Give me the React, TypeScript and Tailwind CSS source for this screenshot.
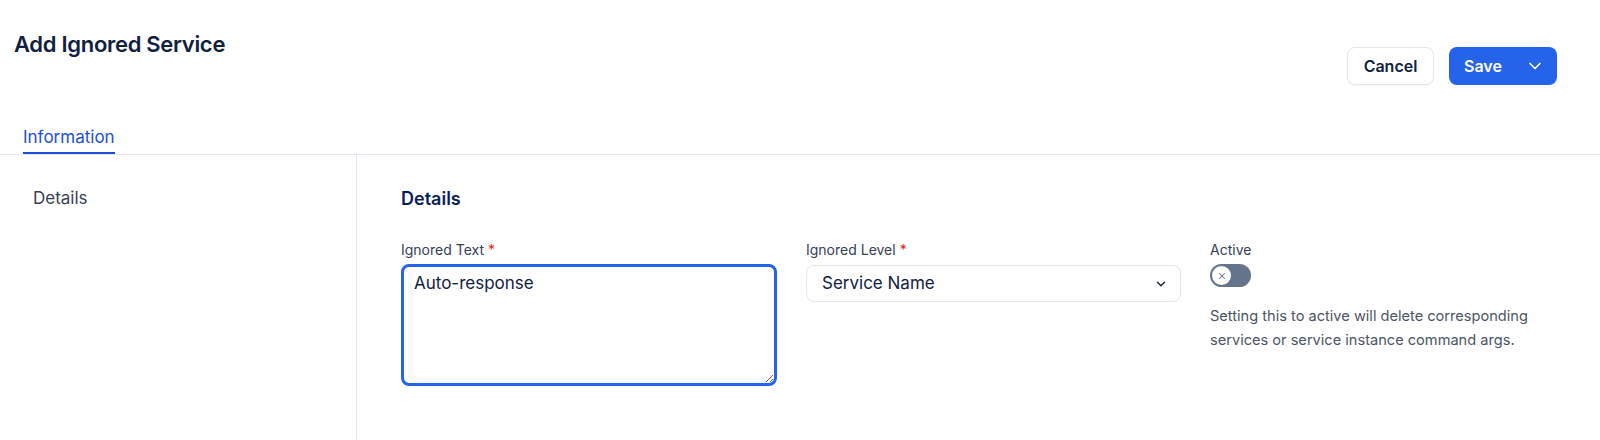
import { ChevronDown, X } from 'lucide-react';

export default function App() {
  return (
    <div className="h-[440px] w-[1600px] overflow-hidden bg-white font-['Inter',sans-serif] text-[#0f1f3d]">
      <div className="flex items-start justify-between pl-[14px] pr-[43px]">
        <h1 className="pt-[30px] text-[22px] font-semibold leading-[28px] tracking-[-0.3px] text-[#0f213f]">Add Ignored Service</h1>
        <div className="mt-[47px] flex gap-[15px]">
          <button className="h-[38px] w-[87px] rounded-[8px] border border-[#e5e7eb] bg-white text-[16px] font-semibold text-[#0f213f] shadow-[0_1px_2px_rgba(0,0,0,0.04)]">
            Cancel
          </button>
          <button className="flex h-[38px] w-[108px] items-center justify-between rounded-[8px] bg-[#2563eb] pl-[15px] pr-[12px] text-[16px] font-semibold text-white">
            Save
            <ChevronDown size={20} strokeWidth={2} />
          </button>
        </div>
      </div>

      <div className="mt-[40px] flex border-b border-[#e2e8f0] pl-[23px]">
        <div className="border-b-2 border-[#1d4ed8] pb-[3px] text-[17px] leading-[24px] text-[#1d4ed8]">Information</div>
      </div>

      <div className="flex h-[286px]">
        <aside className="w-[357px] shrink-0 border-r border-[#e2e8f0] pl-[33px] pt-[31px]">
          <div className="text-[17px] leading-[24px] text-[#374151]">Details</div>
        </aside>
        <main className="flex-1 pl-[44px] pt-[30px]">
          <h2 className="text-[18px] font-semibold leading-[28px] text-[#0a1e5c]">Details</h2>
          <div className="mt-[27px] flex gap-[29px]">
            <div className="w-[376px]">
              <label className="block text-[14px] leading-[20px] text-[#334155]">
                Ignored Text <span className="text-[#dc2626]">*</span>
              </label>
              <textarea
                defaultValue="Auto-response"
                className="mt-[4px] block h-[122px] w-[376px] resize-y rounded-[8px] border-[3px] border-[#2563eb] px-[10px] py-[4px] text-[17px] leading-[24px] text-[#0f213f] outline-none"
              />
            </div>
            <div className="w-[375px]">
              <label className="block text-[14px] leading-[20px] text-[#334155]">
                Ignored Level <span className="text-[#dc2626]">*</span>
              </label>
              <div className="mt-[5px] flex h-[37px] items-center justify-between rounded-[8px] border border-[#e2e8f0] pl-[15px] pr-[12px] text-[17px] text-[#0f213f]">
                <span>Service Name</span>
                <ChevronDown size={14} strokeWidth={2.5} className="text-[#1f2937]" />
              </div>
            </div>
            <div className="w-[376px]">
              <label className="block text-[14px] leading-[20px] text-[#334155]">Active</label>
              <div className="mt-[4px] flex h-[23px] w-[41px] items-center rounded-full bg-[#64748b] px-[2px]">
                <div className="flex h-[19px] w-[19px] items-center justify-center rounded-full bg-white">
                  <X size={10} strokeWidth={2.5} className="text-[#64748b]" />
                </div>
              </div>
              <p className="mt-[18px] w-[350px] text-[14.6px] leading-[23.5px] text-[#4b5563]">
                Setting this to active will delete corresponding services or service instance command args.
              </p>
            </div>
          </div>
        </main>
      </div>
    </div>
  );
}
